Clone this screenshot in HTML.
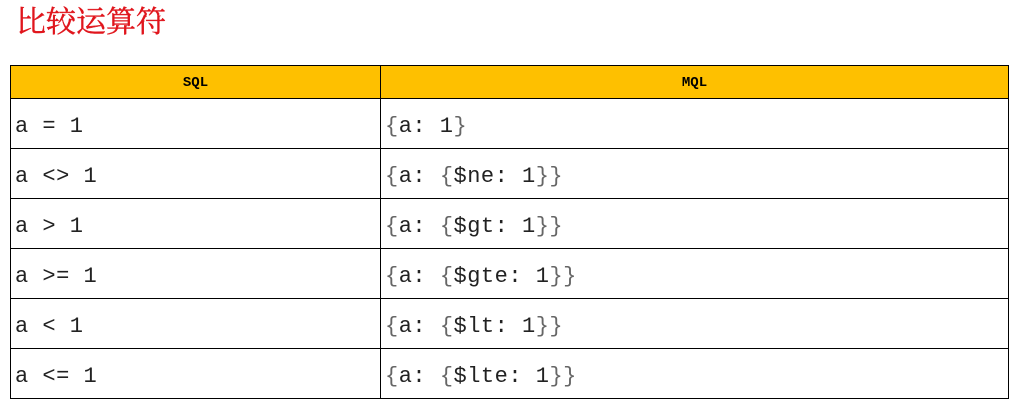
<!DOCTYPE html>
<html><head><meta charset="utf-8"><style>
body{margin:0;background:#fff;width:1019px;height:411px;overflow:hidden;position:relative}
h1{position:absolute;left:16px;top:0;margin:0;font:30px "Noto Serif CJK SC","WenQuanYi Zen Hei",serif;color:#e0151c;line-height:38px;-webkit-text-stroke:0.4px #e0151c}
table{position:absolute;left:10px;top:65px;border-collapse:collapse;width:999px}
td,th{border:1px solid #000;padding:0 0 0 4px;box-sizing:border-box}
th{background:#fec000;height:33px;font:bold 14px "Liberation Mono",monospace;text-align:center;padding:2px 0 0}
tr{height:50px}
tr:first-child{height:33px}
td{height:50px;font:22px "Liberation Mono",monospace;color:#222;white-space:pre;padding-top:6px;letter-spacing:0.5px}
.b{color:#666}
</style></head><body>
<h1>比较运算符</h1>
<table>
<tr><th style="width:370px">SQL</th><th>MQL</th></tr>
<tr><td>a = 1</td><td><span class="b">{</span>a: 1<span class="b">}</span></td></tr>
<tr><td>a &lt;&gt; 1</td><td><span class="b">{</span>a: <span class="b">{</span>$ne: 1<span class="b">}}</span></td></tr>
<tr><td>a &gt; 1</td><td><span class="b">{</span>a: <span class="b">{</span>$gt: 1<span class="b">}}</span></td></tr>
<tr><td>a &gt;= 1</td><td><span class="b">{</span>a: <span class="b">{</span>$gte: 1<span class="b">}}</span></td></tr>
<tr><td>a &lt; 1</td><td><span class="b">{</span>a: <span class="b">{</span>$lt: 1<span class="b">}}</span></td></tr>
<tr><td>a &lt;= 1</td><td><span class="b">{</span>a: <span class="b">{</span>$lte: 1<span class="b">}}</span></td></tr>
</table>
</body></html>
